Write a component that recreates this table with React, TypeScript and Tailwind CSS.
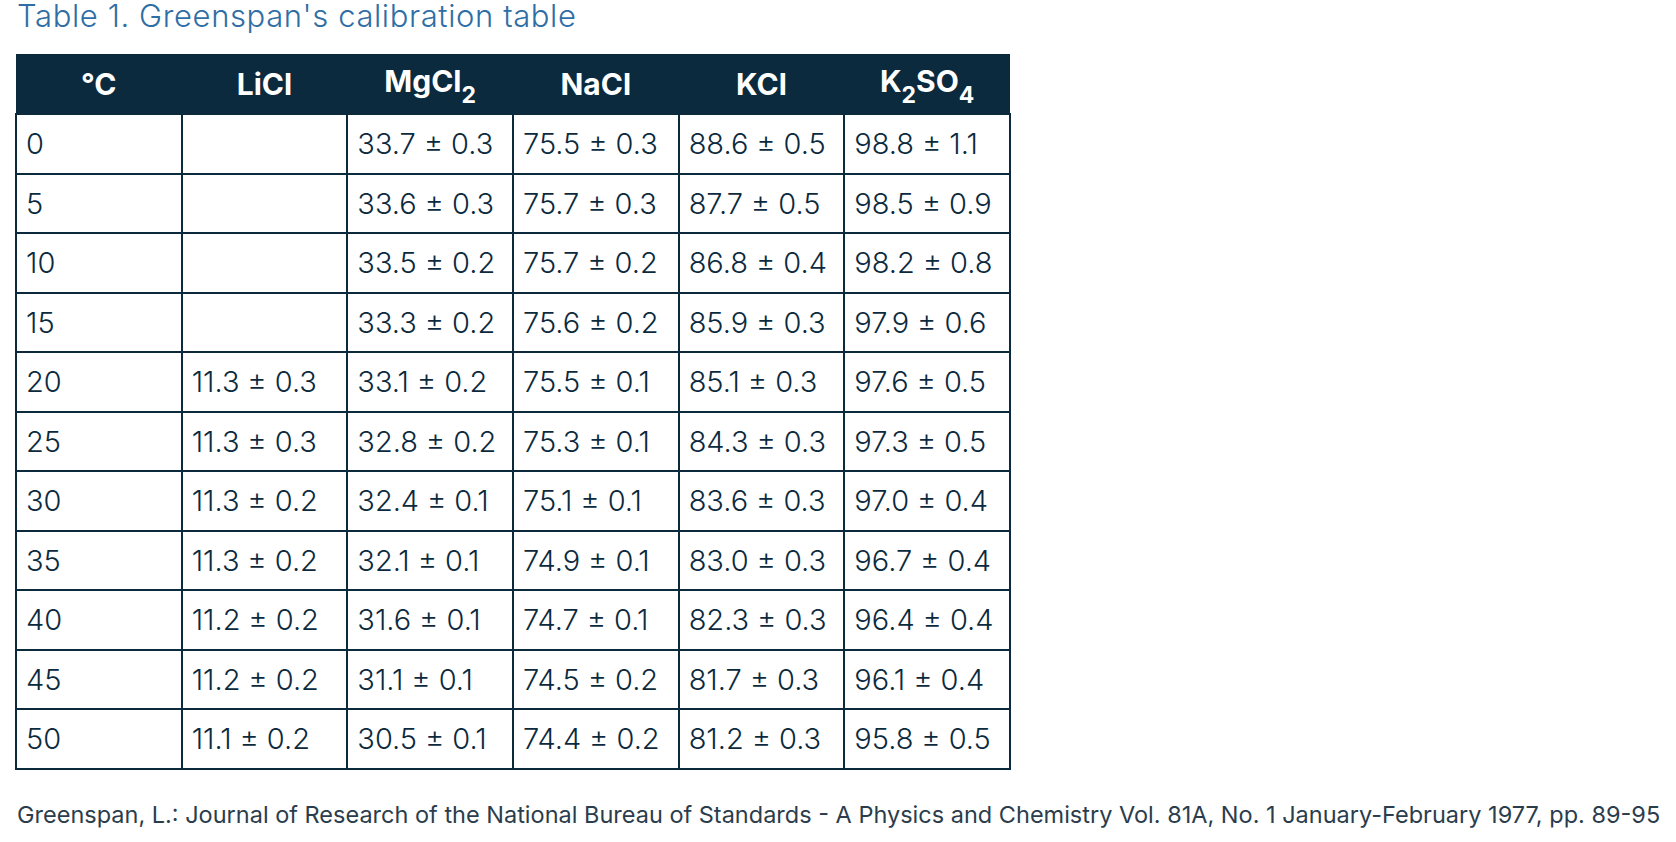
const HEAD = [
  <>°C</>,
  <>LiCl</>,
  <>
    MgCl<sub className="text-[23px] align-[-5px] leading-none">2</sub>
  </>,
  <>NaCl</>,
  <>KCl</>,
  <>
    K<sub className="text-[23px] align-[-5px] leading-none">2</sub>SO
    <sub className="text-[23px] align-[-5px] leading-none">4</sub>
  </>,
];

const ROWS = [
  ["0", "", "33.7 ± 0.3", "75.5 ± 0.3", "88.6 ± 0.5", "98.8 ± 1.1"],
  ["5", "", "33.6 ± 0.3", "75.7 ± 0.3", "87.7 ± 0.5", "98.5 ± 0.9"],
  ["10", "", "33.5 ± 0.2", "75.7 ± 0.2", "86.8 ± 0.4", "98.2 ± 0.8"],
  ["15", "", "33.3 ± 0.2", "75.6 ± 0.2", "85.9 ± 0.3", "97.9 ± 0.6"],
  ["20", "11.3 ± 0.3", "33.1 ± 0.2", "75.5 ± 0.1", "85.1 ± 0.3", "97.6 ± 0.5"],
  ["25", "11.3 ± 0.3", "32.8 ± 0.2", "75.3 ± 0.1", "84.3 ± 0.3", "97.3 ± 0.5"],
  ["30", "11.3 ± 0.2", "32.4 ± 0.1", "75.1 ± 0.1", "83.6 ± 0.3", "97.0 ± 0.4"],
  ["35", "11.3 ± 0.2", "32.1 ± 0.1", "74.9 ± 0.1", "83.0 ± 0.3", "96.7 ± 0.4"],
  ["40", "11.2 ± 0.2", "31.6 ± 0.1", "74.7 ± 0.1", "82.3 ± 0.3", "96.4 ± 0.4"],
  ["45", "11.2 ± 0.2", "31.1 ± 0.1", "74.5 ± 0.2", "81.7 ± 0.3", "96.1 ± 0.4"],
  ["50", "11.1 ± 0.2", "30.5 ± 0.1", "74.4 ± 0.2", "81.2 ± 0.3", "95.8 ± 0.5"],
];

export default function App() {
  return (
    <div className="min-h-screen bg-white px-[17px] font-['Inter','Liberation_Sans',sans-serif]">
      <h3 className="text-[31px] leading-[32px] font-[350] tracking-[0.6px] text-[#2f6ea5]">
        Table 1. Greenspan's calibration table
      </h3>

      <table className="mt-[22px] -ml-[2px] w-[996px] table-fixed border-collapse text-[#0c2a3e]">
        <thead>
          <tr className="h-[60px] bg-[#0c2a3e] text-white">
            {HEAD.map((h, i) => (
              <th key={i} className="text-[30px] font-bold leading-none text-center">
                {h}
              </th>
            ))}
          </tr>
        </thead>
        <tbody>
          {ROWS.map((row) => (
            <tr key={row[0]} className="h-[59.5px]">
              {row.map((cell, i) => (
                <td
                  key={i}
                  className="border-2 border-[#0c2a3e] px-[9px] text-[29px] font-[350] leading-none whitespace-nowrap"
                >
                  {cell}
                </td>
              ))}
            </tr>
          ))}
        </tbody>
      </table>

      <p className="mt-[31px] text-[23.5px] leading-[28px] text-[#2b3d4c] whitespace-nowrap">
        Greenspan, L.: Journal of Research of the National Bureau of Standards - A Physics and
        Chemistry Vol. 81A, No. 1 January-February 1977, pp. 89-95
      </p>
    </div>
  );
}
